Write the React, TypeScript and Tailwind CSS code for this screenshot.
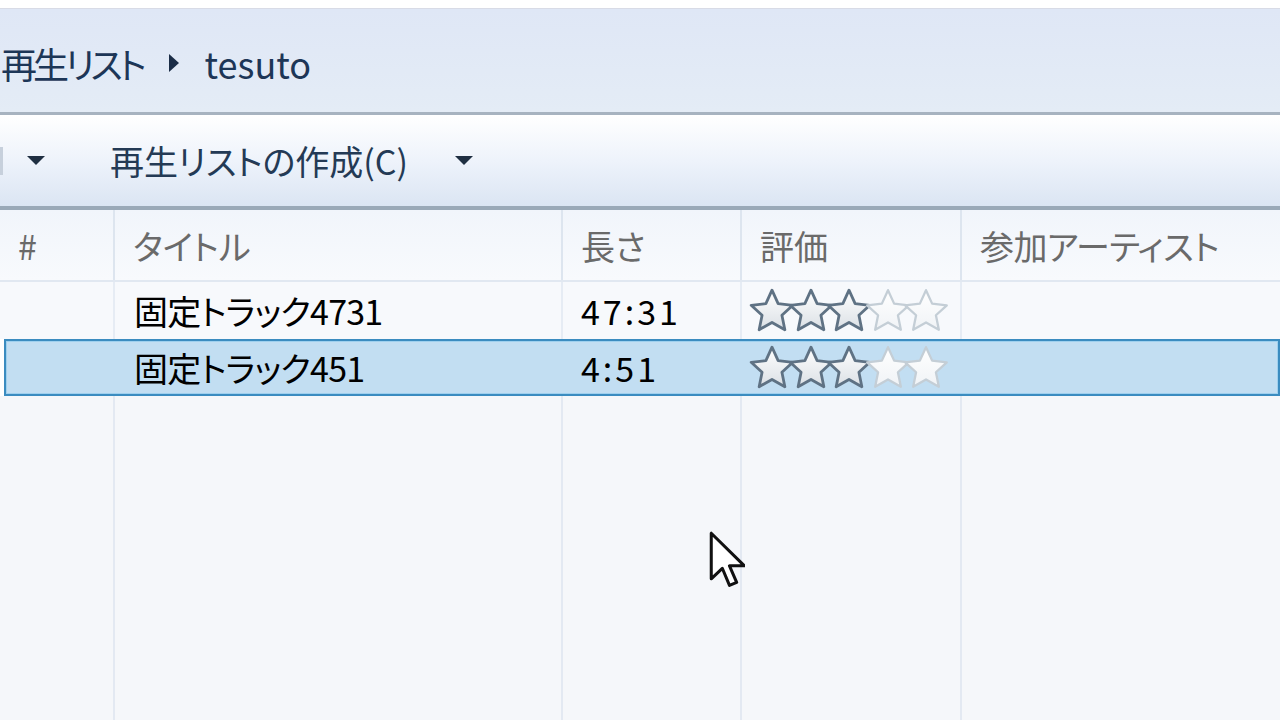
import React from 'react';

const FONT = "[font-family:'Noto_Sans_CJK_JP','Noto_Sans',sans-serif]";

const COLS = [115, 448, 179, 220];

const tracks = [
  { title: '固定トラック4731', length: '47:31', rating: 3, selected: false },
  { title: '固定トラック451', length: '4:51', rating: 3, selected: true },
];

const Star = ({ on, id }: { on: boolean; id: string }) => (
  <svg viewBox="0 0 24 24" className="w-[50px] h-[50px] -mr-[11.4px] shrink-0">
    <defs>
      <linearGradient id={id} x1="0" y1="0" x2="0" y2="1">
        <stop offset="0" stopColor="#ffffff" />
        <stop offset="1" stopColor={on ? '#dbe0e5' : '#f0f3f6'} />
      </linearGradient>
    </defs>
    <path
      d="M12 2L14.94 8.45L21.99 9.26L16.76 14.05L18.17 20.99L12 17.5L5.83 20.99L7.24 14.05L2.01 9.26L9.06 8.45Z"
      fill={`url(#${id})`}
      stroke={on ? '#5f7284' : '#c4ced6'}
      strokeWidth={on ? 1.35 : 1.1}
      strokeLinejoin="round"
    />
  </svg>
);

const Caret = () => (
  <svg viewBox="0 0 18 9" className="w-[18px] h-[9px]">
    <path d="M0 0h18L9 9z" fill="#1f2f42" />
  </svg>
);

export default function App() {
  return (
    <div className={`relative w-[1280px] h-[720px] overflow-hidden bg-white ${FONT}`}>
      <div className="h-[8px] bg-white" />

      {/* breadcrumb */}
      <div className="h-[107px] border-t border-[#d8dbe6] border-b-[3px] border-b-[#a7b3c0] bg-gradient-to-b from-[#dfe7f6] to-[#e4ecf6] flex items-center pt-[5px]">
        <div className="flex items-center pl-[1px] text-[36px] text-[#1d3657] [font-feature-settings:'palt']">
          <span className="tracking-[-4px]">再生リスト</span>
          <svg viewBox="0 0 10 18" className="w-[10px] h-[18px] ml-[26px] mr-[26px]">
            <path d="M0 0l10 9-10 9z" fill="#1b2d47" />
          </svg>
          <span>tesuto</span>
        </div>
      </div>

      {/* toolbar */}
      <div className="h-[95px] border-b-[4px] border-b-[#9aa9b8] bg-gradient-to-b from-[#ffffff] via-[#eef3fb] to-[#dbe5f3] flex items-center">
        <div className="w-[3px] h-[28px] bg-[#c7d0dc]" />
        <div className="ml-[24px]">
          <Caret />
        </div>
        <span className="ml-[65px] text-[34px] text-[#243a55] [font-feature-settings:'palt']">再生リストの作成(C)</span>
        <div className="ml-[47px]">
          <Caret />
        </div>
      </div>

      {/* header */}
      <div className="h-[72px] flex bg-gradient-to-b from-[#f1f5fb] to-[#f8fafd] border-b-[2px] border-b-[#e1e8f1] text-[34px] text-[#6a6a6a] [font-feature-settings:'palt']">
        {['#', 'タイトル', '長さ', '評価'].map((h, i) => (
          <div
            key={h}
            style={{ width: COLS[i] }}
            className="shrink-0 flex items-center pl-[18px] border-r-[2px] border-r-[#dde5ef]"
          >
            {h}
          </div>
        ))}
        <div className="flex-1 flex items-center pl-[18px] tracking-[-0.5px]">参加アーティスト</div>
      </div>

      {/* rows */}
      {tracks.map((t, r) => (
        <div
          key={t.title}
          className={
            t.selected
              ? 'h-[57px] ml-[4px] flex items-center bg-[#c2def2] border-[2px] border-[#3b8cc0] shadow-[inset_0_0_0_1px_#9fd0ee] text-[34px] text-black'
              : 'h-[57px] flex items-center bg-[#f7f9fc] text-[34px] text-black'
          }
        >
          <div
            style={{ width: t.selected ? COLS[0] - 6 : COLS[0] }}
            className={`shrink-0 h-full ${t.selected ? '' : 'border-r-[2px] border-r-[#e6ecf4]'}`}
          />
          <div
            style={{ width: COLS[1] }}
            className={`shrink-0 h-full flex items-center pl-[19px] tracking-[-0.8px] [font-feature-settings:'palt'] ${t.selected ? '' : 'border-r-[2px] border-r-[#e6ecf4]'}`}
          >
            {t.title}
          </div>
          <div
            style={{ width: COLS[2] }}
            className={`shrink-0 h-full flex items-center pl-[18px] tracking-[3px] ${t.selected ? '' : 'border-r-[2px] border-r-[#e6ecf4]'}`}
          >
            {t.length}
          </div>
          <div
            style={{ width: COLS[3] }}
            className={`shrink-0 h-full flex items-center pl-[5px] overflow-hidden ${t.selected ? '' : 'border-r-[2px] border-r-[#e6ecf4]'}`}
          >
            {[0, 1, 2, 3, 4].map((s) => (
              <Star key={s} on={s < t.rating} id={`g${r}${s}`} />
            ))}
          </div>
          <div className="flex-1 h-full" />
        </div>
      ))}

      {/* empty area with column lines */}
      <div className="h-[330px] flex bg-[#f5f7fa]">
        {COLS.map((w, i) => (
          <div key={i} style={{ width: w }} className="shrink-0 h-full border-r-[2px] border-r-[#e3e9f2]" />
        ))}
        <div className="flex-1" />
      </div>

      {/* mouse cursor */}
      <svg viewBox="0 0 13 21" className="absolute left-[709px] top-[531px] w-[36px] h-[58px]">
        <path
          d="M0.8 0.8v16.5l4-3.8 2.6 6.2 2.6-1.1-2.6-6h5.4z"
          fill="#ffffff"
          stroke="#111111"
          strokeWidth="1.1"
          strokeLinejoin="round"
        />
      </svg>
    </div>
  );
}
